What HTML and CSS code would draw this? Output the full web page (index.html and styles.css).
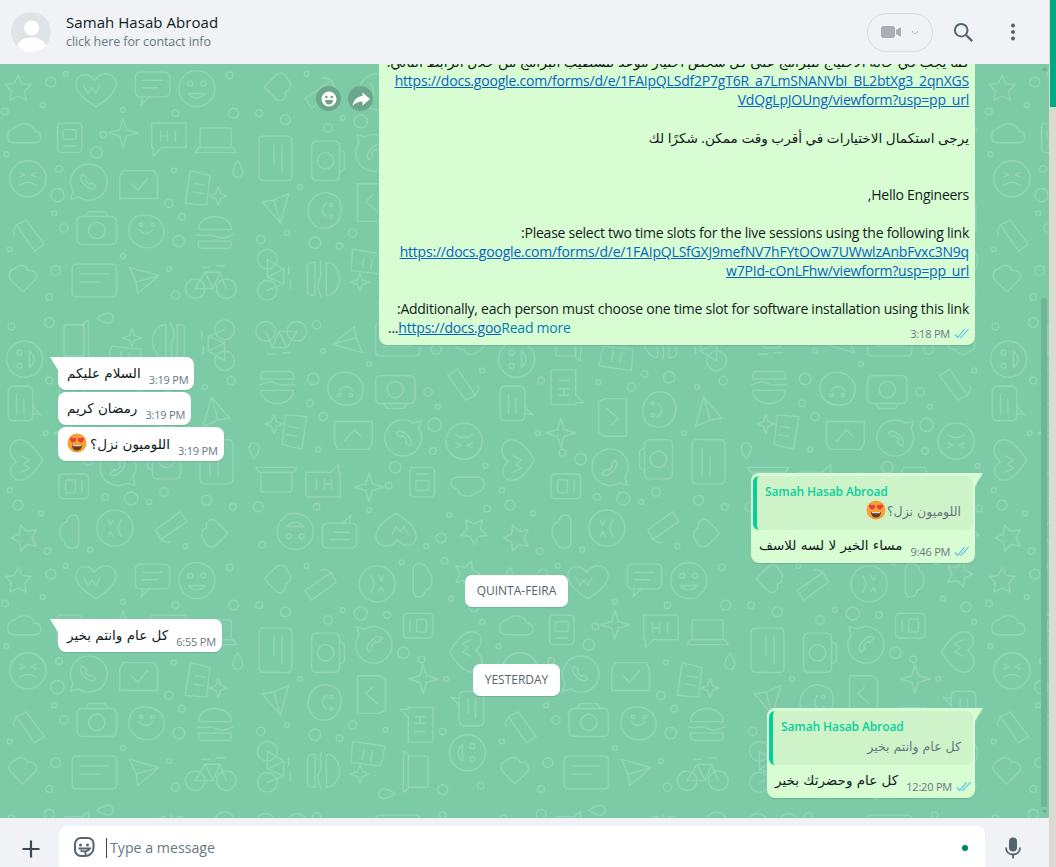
FILE: index.html
```html
<!DOCTYPE html>
<html lang="en">
<head>
<meta charset="utf-8">
<title>Chat</title>
<link rel="stylesheet" href="styles.css">
</head>
<body>
<svg class="defs" width="0" height="0" aria-hidden="true">
  <defs>
    <symbol id="ticks" viewBox="0 0 16 11"><path d="M1 6.500l2.800 3L10.500 1.200M6.200 9.200l.5.4L14.600 1.200" fill="none" stroke="#53bdeb" stroke-width="1.100"/></symbol>
    <symbol id="hearteyes" viewBox="0 0 36 36">
      <circle cx="18" cy="18" r="17" fill="#f5a133"/>
      <path d="M9 21c3 1 15 1 18 0 0 7-4 10.500-9 10.500S9 28 9 21z" fill="#6a3a20"/>
      <path d="M10.500 21.500c4 .8 11 .8 15 0v1.800c-4 .8-11 .8-15 0z" fill="#fff"/>
      <path d="M11 17.500C6 14.500 4 11 6 9c2-1.800 4-.8 5 1 1.500-1.700 3.500-2 5-.2 1.700 2.300-.2 5.700-5 7.700z" fill="#ec3b41"/>
      <path d="M25 17.500c5-3 7-6.500 5-8.500-2-1.800-4-.8-5 1-1.500-1.700-3.500-2-5-.2-1.700 2.300.2 5.700 5 7.700z" fill="#ec3b41"/>
    </symbol>
  </defs>
</svg>
<div class="app">
  <div class="main">
    <header class="topbar">
      <svg class="avatar" viewBox="0 0 40 40" width="40" height="40"><circle cx="20" cy="20" r="20" fill="#dfe5e7"/><circle cx="20.500" cy="16" r="7.500" fill="#fff"/><path d="M6 34c2-6 8-8.500 14.500-8.500S33 28 35 34c-3.500 3.500-9 6-15 6s-10.500-2.500-14-6z" fill="#fff"/></svg>
      <div class="contact">
        <div class="contact-name">Samah Hasab Abroad</div>
        <div class="contact-sub">click here for contact info</div>
      </div>
      <div class="call-pill">
        <svg viewBox="0 0 22 14" width="22" height="14"><rect x="0" y="1" width="14" height="12" rx="2.500" fill="#a7afb8"/><path d="M15 5l5-3v10l-5-3z" fill="#a7afb8"/></svg>
        <svg viewBox="0 0 8 5" width="8" height="5"><path d="M1 1l3 3 3-3" fill="none" stroke="#b6bcc3" stroke-width="1"/></svg>
      </div>
      <svg class="top-icon" viewBox="0 0 24 24" width="24" height="24"><circle cx="10.200" cy="10.200" r="6.300" fill="none" stroke="#54656f" stroke-width="2"/><path d="M15 15l6.200 6.200" stroke="#54656f" stroke-width="2.400" fill="none"/></svg>
      <svg class="top-icon dots" viewBox="0 0 24 24" width="24" height="24"><circle cx="12" cy="5.500" r="2" fill="#54656f"/><circle cx="12" cy="12" r="2" fill="#54656f"/><circle cx="12" cy="18.500" r="2" fill="#54656f"/></svg>
    </header>

    <section class="pane">
      <svg class="wallpaper" width="100%" height="100%" aria-hidden="true">
        <defs>
          <g id="doodles" fill="none" stroke="#93d5b7" stroke-width="1.600" stroke-linejoin="round" stroke-linecap="round">
            <path d="M22 14l5 10 11 1-8 8 2 11-10-5-10 5 2-11-8-8 11-1z"/>
            <circle cx="62" cy="22" r="6"/><circle cx="80" cy="12" r="3"/><circle cx="52" cy="50" r="3"/><circle cx="6" cy="58" r="4"/>
            <path d="M115 20c10-14 30-8 26 8-3 10-14 18-24 24-10-6-22-14-24-24-3-16 14-20 22-8z"/>
            <path d="M102 26l5 10 5-7 5 7 5-10"/>
            <rect x="165" y="10" width="42" height="30" rx="6"/><path d="M174 40l-2 10 10-10M174 20h24M174 29h18"/>
            <circle cx="240" cy="30" r="22"/><circle cx="232" cy="24" r="3"/><circle cx="248" cy="24" r="3"/><path d="M230 36c5 7 15 7 20 0z"/>
            <circle cx="280" cy="14" r="4"/><circle cx="285" cy="60" r="6"/><circle cx="150" cy="56" r="3"/><circle cx="214" cy="60" r="4"/>
            <path d="M18 78c8-8 22-6 24 4 8 0 12 12 2 14H16C6 94 8 80 18 78z"/>
            <rect x="70" y="72" width="30" height="36" rx="5"/><rect x="77" y="80" width="16" height="12" rx="2"/><path d="M78 100h14"/>
            <circle cx="126" cy="86" r="4"/><circle cx="118" cy="108" r="7"/>
            <path d="M150 66l4 14 14 4-14 4-4 14-4-14-14-4 14-4z"/>
            <path d="M185 72h42v30h-30l-10 10v-10h-2z"/><path d="M196 82v12M196 88h8M204 82v12M214 82v12"/>
            <rect x="244" y="78" width="38" height="24" rx="3"/><path d="M238 108h50l-4-6h-42z"/>
            <path d="M290 118c4 6 6 10 6 14a6 6 0 0 1-12 0c0-4 2-8 6-14z"/>
            <circle cx="34" cy="140" r="22"/><path d="M24 148c6-5 14-5 20 0M24 132l6 3-6 3M44 132l-6 3 6 3"/>
            <circle cx="72" cy="128" r="4"/><circle cx="70" cy="160" r="8"/><circle cx="8" cy="110" r="3"/>
            <path d="M108 122a22 22 0 1 1-12 40l-10 3 3-10a22 22 0 0 1 19-33z"/><path d="M100 134c-3 3-2 8 3 13s10 7 14 3l-5-5-3 2-5-5 2-3z"/>
            <path d="M150 130h38l4 8v26h-46v-26z"/><path d="M160 146l8 8 12-14"/>
            <circle cx="212" cy="130" r="3"/><circle cx="206" cy="170" r="5"/>
            <path d="M232 130l24 6-4 36-26-2z"/><path d="M238 146l12 2M236 156l12 2"/>
            <path d="M266 150l3 8 8 3-8 3-3 8-3-8-8-3 8-3z"/>
            <path d="M20 196l12-6 22 30-12 8zM20 196l-4 8 2 4"/>
            <circle cx="78" cy="200" r="5"/><circle cx="66" cy="182" r="3"/>
            <rect x="94" y="186" width="48" height="34" rx="6"/><circle cx="118" cy="203" r="10"/><path d="M104 186l4-6h20l4 6"/>
            <path d="M166 186c16-6 32 2 34 16 2 14-10 24-24 22-14-2-22-16-18-26 1-5 4-10 8-12z"/><path d="M170 202c4 6 12 6 16 0"/><circle cx="172" cy="196" r="2"/><circle cx="186" cy="196" r="2"/>
            <circle cx="222" cy="186" r="4"/><circle cx="218" cy="216" r="7"/>
            <path d="M242 202c0-10 10-16 20-16s20 6 20 16zM240 208c7 4 14-2 22 2s14 2 22-2M242 216h40v4a5 5 0 0 1-5 5h-30a5 5 0 0 1-5-5z"/>
            <path d="M18 250c4-6 14-6 16 2 8-2 14 6 8 12l-14 14-14-14c-6-6-2-14 4-14z"/>
            <circle cx="68" cy="252" r="6"/><circle cx="60" cy="284" r="4"/><circle cx="12" cy="226" r="3"/>
            <rect x="88" y="244" width="54" height="40" rx="5"/><path d="M98 256h34M98 266h24"/>
            <path d="M158 248l36 10-26 22-2-14zM166 266l28-8"/>
            <circle cx="206" cy="250" r="3"/><circle cx="214" cy="282" r="5"/><circle cx="150" cy="234" r="3"/>
            <circle cx="238" cy="274" r="12"/><circle cx="276" cy="274" r="12"/><path d="M238 274l12-20h18l8 20M250 254l10 20h-22M268 254l-8 20M246 248h10M264 246h10"/>
          </g>
          <pattern id="doodle" width="600" height="600" patternUnits="userSpaceOnUse" patternTransform="scale(.82)">
            <use href="#doodles"/>
            <use href="#doodles" transform="translate(600 0) rotate(90)"/>
            <use href="#doodles" transform="translate(0 600) rotate(270)"/>
            <use href="#doodles" transform="translate(600 600) rotate(180)"/>
          </pattern>
        </defs>
        <rect width="100%" height="100%" fill="url(#doodle)"/>
      </svg>

      <div class="scroller">
        <div class="row row-out row-long">
          <div class="hover-actions">
            <span class="round-btn"><svg viewBox="0 0 20 20" width="20" height="20"><circle cx="10" cy="10" r="7.500" fill="#fff"/><circle cx="7.300" cy="8" r="1.300" fill="#6da58b"/><circle cx="12.700" cy="8" r="1.300" fill="#6da58b"/><path d="M6 11h8c0 3-2 4.500-4 4.500S6 14 6 11z" fill="#6da58b"/></svg></span>
            <span class="round-btn"><svg viewBox="0 0 20 20" width="20" height="20"><path d="M11.500 3.500L19 10l-7.500 6.500v-4C7 12.500 4 14 1.500 17 2.500 11 6 7.500 11.500 7z" fill="#fff"/></svg></span>
          </div>
          <div class="bubble bubble-long">
            <div class="long-text" dir="rtl">
              <div class="line">كما يجب في حالة الاحتياج للبرامج على كل شخص اختيار موعد لتسطيب البرامج من خلال الرابط التالي:</div>
              <div class="line"><a class="link">https://docs.google.com/forms/d/e/1FAIpQLSdf2P7gT6R_a7LmSNANVbI_BL2btXg3_2qnXGS</a></div>
              <div class="line"><a class="link">VdQgLpJOUng/viewform?usp=pp_url</a></div>
              <div class="line blank"></div>
              <div class="line line-ar">يرجى استكمال الاختيارات في أقرب وقت ممكن. شكرًا لك</div>
              <div class="line blank"></div>
              <div class="line blank"></div>
              <div class="line">Hello Engineers,</div>
              <div class="line blank"></div>
              <div class="line">Please select two time slots for the live sessions using the following link:</div>
              <div class="line"><a class="link">https://docs.google.com/forms/d/e/1FAIpQLSfGXJ9mefNV7hFYtOOw7UWwlzAnbFvxc3N9q</a></div>
              <div class="line"><a class="link">w7PId-cOnLFhw/viewform?usp=pp_url</a></div>
              <div class="line blank"></div>
              <div class="line">Additionally, each person must choose one time slot for software installation using this link:</div>
              <div class="line last-line" dir="ltr"><span>...</span><a class="link">https://docs.goo</a><span class="read-more">Read more</span></div>
            </div>
            <div class="meta meta-long"><span>3:18 PM</span><svg class="ticks" width="16" height="11"><use href="#ticks"/></svg></div>
          </div>
        </div>

        <div class="row row-in first-in">
          <div class="bubble bubble-in tail-in"><span class="msg" dir="rtl">السلام عليكم</span><span class="meta">3:19 PM</span></div>
        </div>
        <div class="row row-in gap2">
          <div class="bubble bubble-in"><span class="msg" dir="rtl">رمضان كريم</span><span class="meta">3:19 PM</span></div>
        </div>
        <div class="row row-in gap2">
          <div class="bubble bubble-in bubble-emoji"><span class="msg" dir="rtl">اللوميون نزل؟<svg class="emoji emoji-wide" width="20" height="20"><use href="#hearteyes"/></svg></span><span class="meta">3:19 PM</span></div>
        </div>

        <div class="row row-out gap12">
          <div class="bubble bubble-out tail-out reply-first">
            <div class="quote">
              <div class="quote-name">Samah Hasab Abroad</div>
              <div class="quote-text" dir="rtl">اللوميون نزل؟<svg class="emoji" width="20" height="20"><use href="#hearteyes"/></svg></div>
            </div>
            <div class="reply-line"><span class="msg" dir="rtl">مساء الخير لا لسه للاسف</span><span class="meta"><span>9:46 PM</span><svg class="ticks" width="16" height="11"><use href="#ticks"/></svg></span></div>
          </div>
        </div>

        <div class="row row-chip chip-a"><span class="chip">QUINTA-FEIRA</span></div>

        <div class="row row-in gap12">
          <div class="bubble bubble-in tail-in"><span class="msg" dir="rtl">كل عام وانتم بخير</span><span class="meta">6:55 PM</span></div>
        </div>

        <div class="row row-chip gap12"><span class="chip">YESTERDAY</span></div>

        <div class="row row-out gap12">
          <div class="bubble bubble-out tail-out reply-second">
            <div class="quote">
              <div class="quote-name">Samah Hasab Abroad</div>
              <div class="quote-text" dir="rtl">كل عام وانتم بخير</div>
            </div>
            <div class="reply-line"><span class="msg" dir="rtl">كل عام وحضرتك بخير</span><span class="meta"><span>12:20 PM</span><svg class="ticks" width="16" height="11"><use href="#ticks"/></svg></span></div>
          </div>
        </div>
      </div>

      <div class="scrollbar">
        <svg class="arrow" viewBox="0 0 8 5" width="7" height="4"><path d="M0 5l4-5 4 5z" fill="#6fb495"/></svg>
        <div class="track"><div class="thumb"></div></div>
        <svg class="arrow" viewBox="0 0 8 5" width="7" height="4"><path d="M0 0l4 5 4-5z" fill="#6fb495"/></svg>
      </div>
    </section>

    <footer class="composer">
      <svg class="plus" viewBox="0 0 20 20" width="20" height="20"><path d="M10 1.500v17M1.500 10h17" stroke="#3b4a54" stroke-width="2.200"/></svg>
      <div class="input">
        <svg class="sticker" viewBox="0 0 24 24" width="24" height="24"><path d="M9 3h7a5.500 5.500 0 0 1 5.500 5.500V13c0 4.500-4 8-8.500 8h-4a6 6 0 0 1-6-6V9a6 6 0 0 1 6-6z" fill="none" stroke="#54656f" stroke-width="2"/><circle cx="8.500" cy="10" r="1.500" fill="#54656f"/><circle cx="15.500" cy="10" r="1.500" fill="#54656f"/><path d="M6.500 13.500h11.500c-.8 1.500-2.500 2.500-4.500 2.800V20.500M8.500 15.500c1 .8 3 1 5 .8" fill="none" stroke="#54656f" stroke-width="1.800"/></svg>
        <span class="caret"></span>
        <span class="placeholder">Type a message</span>
        <span class="dot"></span>
      </div>
      <svg class="mic" viewBox="0 0 24 24" width="24" height="24"><rect x="8" y="1.500" width="8" height="14" rx="4" fill="#54656f"/><path d="M5 11.500c0 4.500 3 7 7 7s7-2.500 7-7" fill="none" stroke="#54656f" stroke-width="1.800"/><path d="M12 18.500v4" stroke="#54656f" stroke-width="1.800"/></svg>
    </footer>
  </div>
  <div class="edge"><div class="edge-thumb"></div></div>
</div>
</body>
</html>
```

FILE: styles.css
```css
* { box-sizing: border-box; }
html, body { margin: 0; height: 100%; overflow: hidden; }
body { font-family: "Open Sans", "DejaVu Sans", sans-serif; color: #111b21; background: #dcd8d2; }
.defs { position: absolute; }

.app { display: flex; height: 867px; width: 1056px; }
.main { width: 1049px; display: flex; flex-direction: column; height: 100%; }
.edge { width: 7px; background: #dcd8d2; }
.edge-thumb { height: 107px; background: #00a884; margin-left: 1px; }

.topbar { height: 64px; flex: none; display: flex; align-items: center; background: #f0f2f5; padding: 0 24px 0 11px; }
.avatar { flex: none; }
.contact { margin-left: 15px; flex: 1; padding-bottom: 3px; }
.contact-name { font-size: 15px; line-height: 21px; letter-spacing: 0.06px; }
.contact-sub { font-size: 12.500px; line-height: 17px; color: #667781; letter-spacing: -0.08px; }
.call-pill { width: 66px; height: 39px; border: 1px solid #d8dbdf; border-radius: 20px; display: flex; align-items: center; padding-left: 13px; gap: 8px; margin-right: 18px; }
.top-icon { flex: none; }
.dots { margin-left: 26px; }

.pane { position: relative; flex: 1; background: #7dcba6; overflow: hidden; display: flex; }
.wallpaper { position: absolute; inset: 0; }
.scroller { position: relative; flex: 1; display: flex; flex-direction: column; justify-content: flex-end; padding: 0 66px 20px 58px; min-width: 0; }

.row { display: flex; flex: none; }
.row-out { justify-content: flex-end; }
.row-in { justify-content: flex-start; }
.row-chip { justify-content: center; }
.first-in { margin-top: 12px; }
.gap2 { margin-top: 2px; }
.gap12 { margin-top: 12px; }
.chip-a { margin-top: 12px; }

.bubble { position: relative; border-radius: 8px; font-size: 14px; line-height: 19px; box-shadow: 0 1px 1px rgba(11, 20, 26, .13); }
.bubble-in { background: #fff; display: flex; align-items: flex-end; padding: 7px 6px 7px 9px; gap: 8px; height: 33px; }
.bubble-emoji { height: 34px; }
.bubble-out { background: #d9fdd3; padding: 3px 2px 7px; }
.tail-in { border-top-left-radius: 0; }
.tail-in::before { content: ""; position: absolute; left: -8px; top: 0; border-top: 13px solid #fff; border-left: 8px solid transparent; }
.tail-out { border-top-right-radius: 0; }
.tail-out::after { content: ""; position: absolute; right: -8px; top: 0; border-top: 13px solid #d9fdd3; border-right: 8px solid transparent; }

.msg { font-family: "DejaVu Sans", sans-serif; font-size: 13.500px; white-space: nowrap; }
.meta { display: inline-flex; align-items: center; gap: 4px; font-size: 11px; line-height: 15px; color: #667781; white-space: nowrap; letter-spacing: -0.2px; margin-bottom: -4px; }
.ticks { display: block; flex: none; }
.emoji { vertical-align: -4px; margin-right: 1px; }
.emoji-wide { margin-right: 3px; }

.bubble-long { width: 596px; height: 292px; display: flex; flex-direction: column; justify-content: flex-end; padding: 0 6px 8px 9px; background: #d9fdd3; }
.row-long { align-items: flex-start; gap: 6px; }
.long-text { font-size: 14px; line-height: 19px; white-space: nowrap; }
.line { height: 19px; text-align: right; letter-spacing: -0.25px; }
.line-ar { font-size: 13.600px; }
.last-line { text-align: left; }
.link { color: #0563c1; text-decoration: underline; letter-spacing: -0.2px; }
.read-more { color: #027eb5; }
.meta-long { position: absolute; right: 5px; bottom: 4px; margin-bottom: 0; }
.hover-actions { display: flex; gap: 7px; margin-top: 33px; }
.round-btn { width: 25px; height: 25px; border-radius: 50%; background: #6aa78b; display: flex; align-items: center; justify-content: center; }

.quote { background: #cff3c9; border-left: 4px solid #06cf9c; border-radius: 6px; padding: 7px 12px 6px 8px; }
.quote-name { font-size: 12px; line-height: 17px; font-weight: 600; color: #06cf9c; letter-spacing: -0.1px; }
.quote-text { font-family: "DejaVu Sans", sans-serif; font-size: 12.500px; line-height: 24px; color: #667781; text-align: right; }
.reply-line { display: flex; align-items: flex-end; justify-content: space-between; padding: 6px 3px 0 6px; gap: 8px; }
.reply-first { width: 224px; height: 90px; }
.reply-second { width: 208px; height: 90px; }

.chip { background: #fff; border-radius: 7px; font-size: 12px; line-height: 32px; height: 32px; padding: 0 12px; color: #54656f; box-shadow: 0 1px 1px rgba(11, 20, 26, .13); }

.scrollbar { position: relative; width: 8px; flex: none; display: flex; flex-direction: column; align-items: center; padding: 3px 2px 4px 0; gap: 3px; }
.track { flex: 1; width: 6px; display: flex; flex-direction: column; justify-content: flex-end; }
.thumb { height: 509px; background: #70b696; border-radius: 3px 3px 0 0; }
.arrow { flex: none; }

.composer { height: 49px; flex: none; background: #f0f2f5; display: flex; align-items: flex-start; padding: 8px 24px 0 21px; }
.plus { flex: none; margin-top: 13px; }
.input { margin-left: 18px; flex: 1; height: 49px; background: #fff; border-radius: 8px 8px 0 0; display: flex; align-items: flex-start; padding: 9px 17px 0 13px; }
.sticker { flex: none; }
.caret { width: 1px; height: 20px; background: #3b4a54; margin: 3px 3px 0 10px; }
.placeholder { flex: 1; font-size: 14.200px; line-height: 26px; color: #667781; }
.dot { width: 6px; height: 6px; border-radius: 50%; background: #008069; margin-top: 10px; }
.mic { flex: none; margin: 10px 0 0 16px; }
```
